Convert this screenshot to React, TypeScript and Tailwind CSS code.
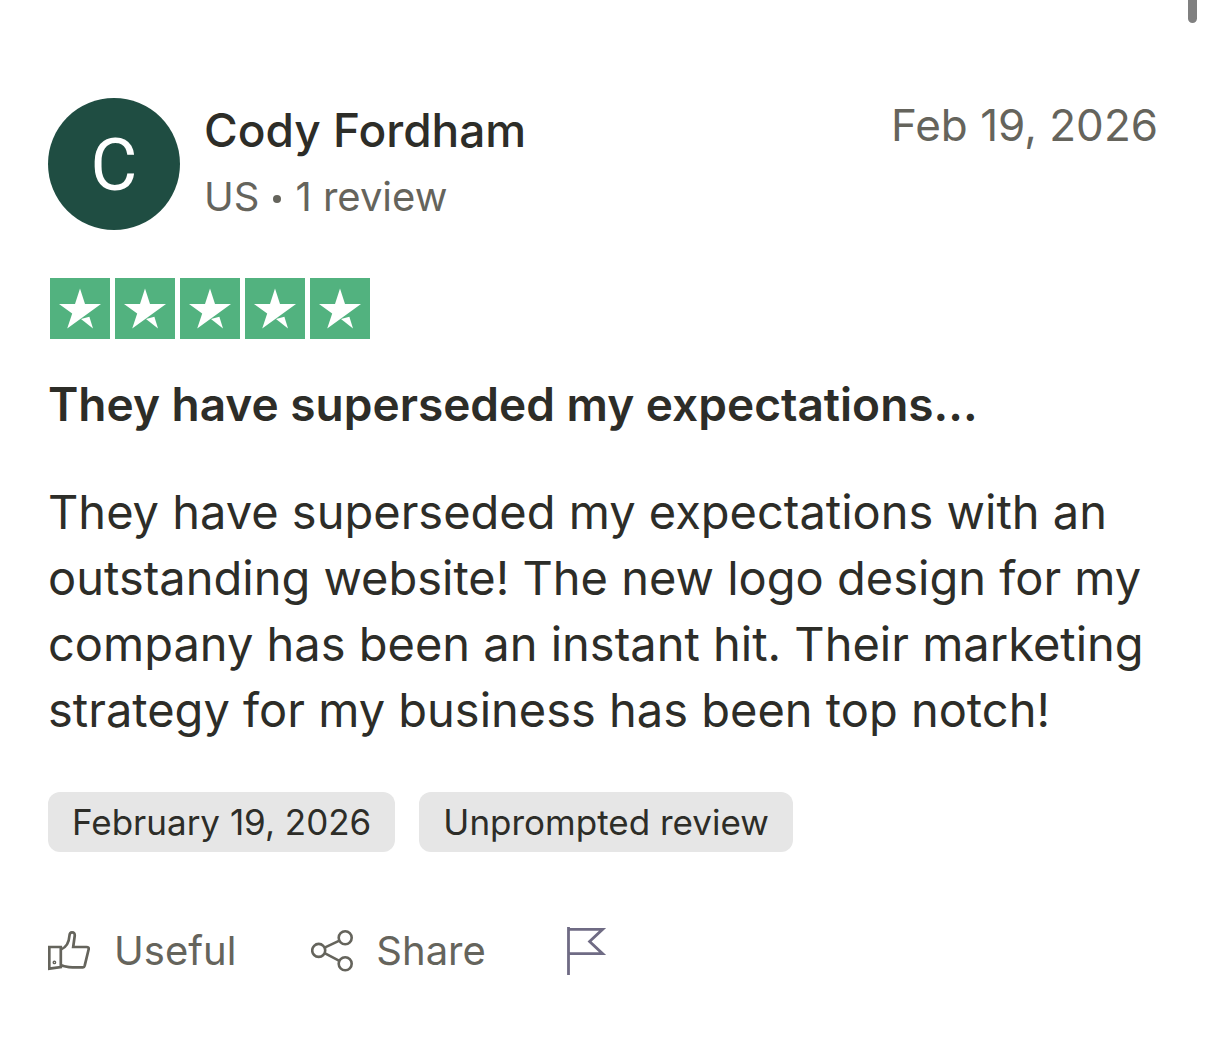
const stars = [1, 2, 3, 4, 5];

const labels = ['February 19, 2026', 'Unprompted review'];

function StarTile() {
  return (
    <svg viewBox="0 0 60 61" className="w-[60px] h-[61px]" aria-hidden="true">
      <rect width="60" height="61" fill="#52b27f" />
      <path d="M30 10.6 L35 26 H51 L17.2 50.6 L22.2 35.6 L9 26 H25 Z" fill="#fff" />
      <path d="M31 41 L39.4 38.8 L43 50.6 Z" fill="#fff" />
    </svg>
  );
}

function ThumbIcon() {
  return (
    <svg viewBox="0 0 42 42" className="size-[42px]" fill="none" stroke="currentColor" strokeWidth="2.7" aria-hidden="true">
      <path d="M1.3 17 H12.8 V37 L1.3 38.6 Z" />
      <circle cx="6.4" cy="32.4" r="1.2" strokeWidth="1.4" />
      <path d="M12.8 19.5 C18 17.5 21 12.5 21.4 6 C21.6 3 22.5 2.3 24 2.3 C26 2.3 27 3.5 26.7 6 L25.2 17 H38.5 C40.3 17 41 18 40.6 19.5 L36.7 35.6 C36.4 36.7 36 37.4 35 37.4 H24.5 C20 37.4 17 36.2 12.8 35.4" />
    </svg>
  );
}

function ShareIcon() {
  return (
    <svg viewBox="0 0 42 42" className="size-[42px]" fill="none" stroke="currentColor" strokeWidth="2.6" aria-hidden="true">
      <circle cx="7.7" cy="20.4" r="6.5" />
      <circle cx="34.2" cy="7.8" r="6.5" />
      <circle cx="34.2" cy="33.8" r="6.5" />
      <path d="M13.6 17.6 L28.4 10.6 M13.6 23.2 L28.4 30.8" />
    </svg>
  );
}

function FlagIcon() {
  return (
    <svg viewBox="0 0 40 48" className="w-10 h-12" fill="none" stroke="currentColor" strokeWidth="2.8" aria-hidden="true">
      <path d="M1.5 0 V48 M1.5 2.3 H35.6 L22.6 14.5 L35.6 26.7 H1.5" />
    </svg>
  );
}

export default function App() {
  return (
    <div className="relative bg-white px-12 pt-[98px] pb-[72px] font-['Inter',sans-serif] text-[#2d2d28]">
      {/* Scrollbar thumb */}
      <div className="absolute top-0 right-[9px] w-[9px] h-[23px] rounded-b-full bg-[#808080]"></div>

      <article>
        <header className="flex items-start justify-between">
          <div className="flex gap-6">
            <div className="flex size-[132px] shrink-0 items-center justify-center rounded-full bg-[#1f4d42] pt-1 font-['Roboto',sans-serif] text-[72px] leading-none text-white">
              C
            </div>
            <div>
              <h2 className="text-[46px] leading-[64px] font-medium">Cody Fordham</h2>
              <p className="flex items-center gap-3.5 text-[40px] leading-[70px] text-[#65645c]">
                <span>US</span>
                <span className="mt-1 size-2 rounded-full bg-[#65645c]"></span>
                <span>1 review</span>
              </p>
            </div>
          </div>
          <time dateTime="2026-02-19" className="text-[44px] leading-[54px] text-[#65645c]">
            Feb 19, 2026
          </time>
        </header>

        <div role="img" aria-label="Rated 5 out of 5 stars" className="mt-[46px] ml-0.5 flex gap-[5px]">
          {stars.map((star) => (
            <StarTile key={star} />
          ))}
        </div>

        <h3 className="mt-8 text-[46px] leading-[66px] font-semibold">They have superseded my expectations...</h3>
        <p className="mt-[42px] text-[47px] leading-[66px]">
          They have superseded my expectations with an outstanding website! The new logo design for my company has been
          an instant hit. Their marketing strategy for my business has been top notch!
        </p>

        <div className="mt-[49px] flex gap-6">
          {labels.map((label) => (
            <span key={label} className="rounded-xl bg-[#e6e6e6] px-6 text-[35px] leading-[60px]">
              {label}
            </span>
          ))}
        </div>

        <div className="mt-[69px] flex items-center text-[40px] leading-[60px] text-[#65645c]">
          <button type="button" className="flex items-center gap-6">
            <ThumbIcon />
            Useful
          </button>
          <button type="button" className="ml-[75px] flex items-center gap-[23px]">
            <ShareIcon />
            Share
          </button>
          <button type="button" aria-label="Report review" className="ml-[81px] text-[#6f6b84]">
            <FlagIcon />
          </button>
        </div>
      </article>
    </div>
  );
}
